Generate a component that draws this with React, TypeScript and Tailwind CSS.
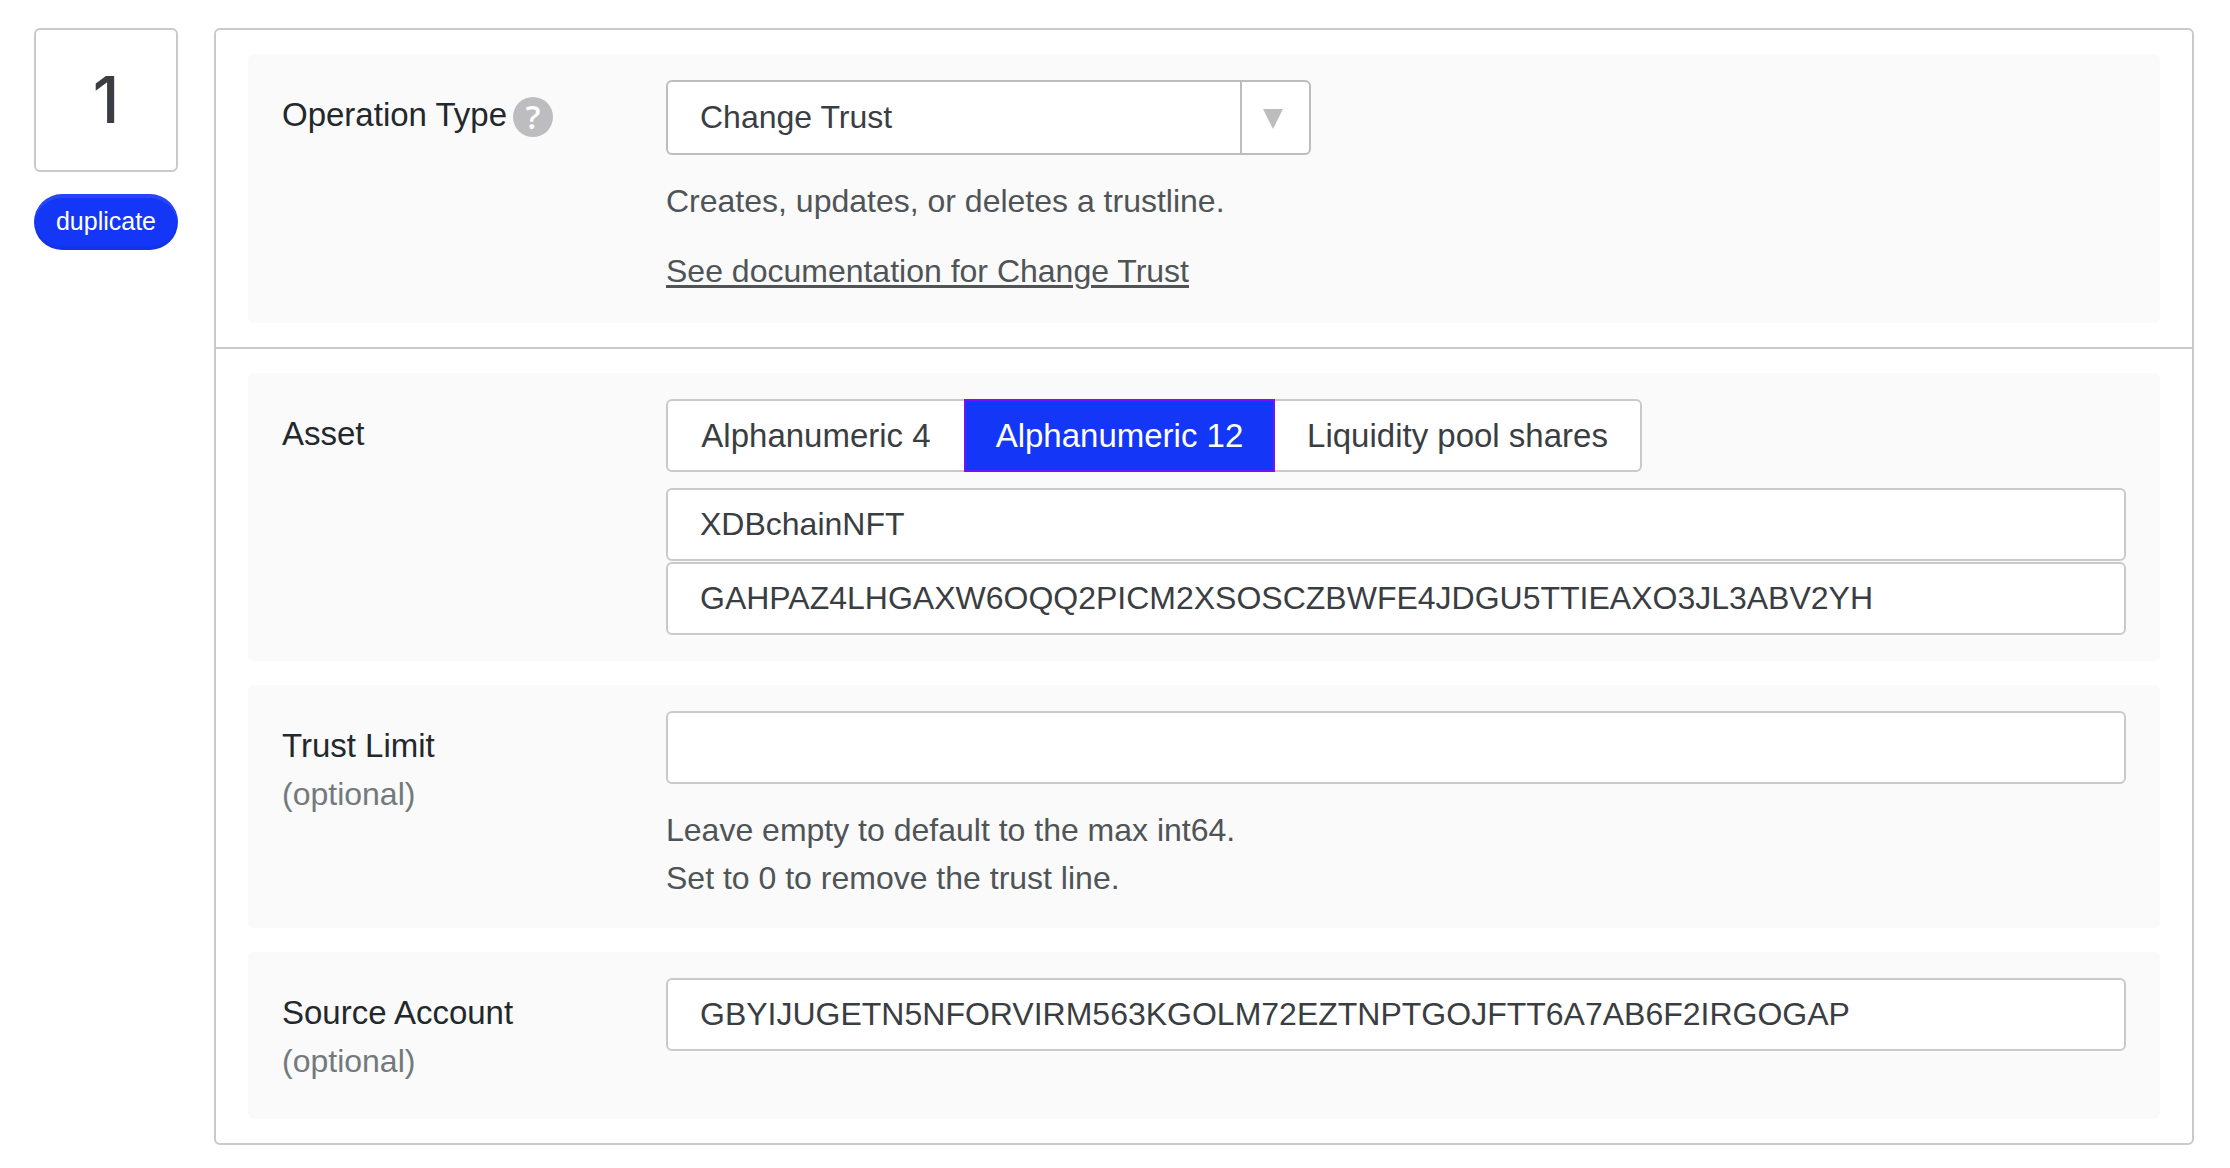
import { useState, type ReactNode } from "react";

const inputClass =
  "block h-[73px] w-full rounded-md border-2 border-[#c9c9c9] bg-white px-8 text-[32px] text-[#3a3e42] outline-none";

function Row({
  label,
  htmlFor,
  optional,
  help,
  children,
}: {
  label: string;
  htmlFor?: string;
  optional?: boolean;
  help?: boolean;
  children: ReactNode;
}) {
  return (
    <div className="flex rounded-md bg-[#fafafa] px-[34px] py-[26px]">
      <div className="w-96 shrink-0 pt-[11px] pb-2 leading-[48px]">
        <div className="flex items-center gap-1.5">
          <label htmlFor={htmlFor} className="text-[33px] text-[#22282c]">
            {label}
          </label>
          {help && (
            <button
              type="button"
              aria-label="Help"
              className="mt-1 flex size-10 items-center justify-center rounded-full bg-[#bdbdbf] font-['Open_Sans',sans-serif] text-[33px] leading-10 font-semibold text-white"
            >
              ?
            </button>
          )}
        </div>
        {optional && <div className="text-[#74797c]">(optional)</div>}
      </div>
      <div className="min-w-0 flex-1">{children}</div>
    </div>
  );
}

const assetTypes = [
  { name: "Alphanumeric 4", width: "w-[300px]" },
  { name: "Alphanumeric 12", width: "w-[311px]" },
  { name: "Liquidity pool shares", width: "w-[369px]" },
];

export default function App() {
  const [assetType, setAssetType] = useState("Alphanumeric 12");
  const [code, setCode] = useState("XDBchainNFT");
  const [issuer, setIssuer] = useState("GAHPAZ4LHGAXW6OQQ2PICM2XSOSCZBWFE4JDGU5TTIEAXO3JL3ABV2YH");
  const [limit, setLimit] = useState("");
  const [source, setSource] = useState("GBYIJUGETN5NFORVIRM563KGOLM72EZTNPTGOJFTT6A7AB6F2IRGOGAP");

  return (
    <main className="flex min-h-screen items-start bg-white py-[22px] pt-7 pr-9 pl-[34px] font-['Liberation_Sans',Arial,sans-serif] text-[32px] text-[#4f5457]">
      <div className="mr-9 w-36 shrink-0">
        <div className="flex h-36 items-center justify-center rounded-md border-2 border-[#c9c9c9] font-['Inter',sans-serif] text-[64px] font-medium text-[#3a3e42]">
          1
        </div>
        <button
          type="button"
          className="mt-[22px] h-14 w-full rounded-full bg-[#1437f7] text-[25px] text-white shadow-[inset_0_-4px_0_rgba(0,0,0,0.06),inset_0_4px_0_rgba(255,255,255,0.08)]"
        >
          duplicate
        </button>
      </div>

      <section className="min-w-0 flex-1 rounded-md border-2 border-[#c9c9c9]">
        <div className="border-b-2 border-[#c9c9c9] px-8 py-6">
          <Row label="Operation Type" htmlFor="operation" help>
            <div className="relative w-[645px]">
              <select
                id="operation"
                className="block h-[75px] w-full appearance-none rounded-md border-2 border-[#bdbdbf] bg-white pr-20 pb-0.5 pl-8 text-[#3a3e42] outline-none"
              >
                <option>Change Trust</option>
              </select>
              <div className="pointer-events-none absolute inset-y-0 right-0 flex w-[71px] items-center justify-center border-l-2 border-[#bdbdbf] pt-0.5 pr-2">
                <svg viewBox="0 0 20 20" className="size-5 fill-[#bdbdbf]" aria-hidden="true">
                  <path d="M0 0h20L10 20z" />
                </svg>
              </div>
            </div>
            <p className="mt-[22px] leading-[48px]">Creates, updates, or deletes a trustline.</p>
            <p className="mt-[22px] pb-0.5 leading-[48px]">
              <a href="#change-trust" className="underline decoration-[3px] underline-offset-3">
                See documentation for Change Trust
              </a>
            </p>
          </Row>
        </div>

        <div className="flex flex-col gap-6 px-8 py-6">
          <Row label="Asset" htmlFor="asset-code">
            <div className="flex" role="group" aria-label="Asset type">
              {assetTypes.map(({ name, width }) => (
                <button
                  key={name}
                  type="button"
                  aria-pressed={name === assetType}
                  onClick={() => setAssetType(name)}
                  className={
                    "-ml-0.5 h-[73px] border-2 text-[33px] whitespace-nowrap first:ml-0 first:rounded-l-md last:rounded-r-md " +
                    width +
                    (name === assetType
                      ? " relative border-[#7214fa] bg-[#1437f7] text-white"
                      : " border-[#c9c9c9] bg-white text-[#3a3e42]")
                  }
                >
                  {name}
                </button>
              ))}
            </div>
            <div className="mt-4 flex flex-col gap-px">
              <input
                id="asset-code"
                className={inputClass}
                value={code}
                onChange={(e) => setCode(e.target.value)}
              />
              <input
                aria-label="Issuer account"
                className={inputClass}
                value={issuer}
                onChange={(e) => setIssuer(e.target.value)}
              />
            </div>
          </Row>
          <Row label="Trust Limit" htmlFor="limit" optional>
            <input id="limit" className={inputClass} value={limit} onChange={(e) => setLimit(e.target.value)} />
            <p className="mt-[22px] leading-[48px]">
              Leave empty to default to the max int64.
              <br />
              Set to 0 to remove the trust line.
            </p>
          </Row>
          <Row label="Source Account" htmlFor="source" optional>
            <input id="source" className={inputClass} value={source} onChange={(e) => setSource(e.target.value)} />
          </Row>
        </div>
      </section>
    </main>
  );
}
